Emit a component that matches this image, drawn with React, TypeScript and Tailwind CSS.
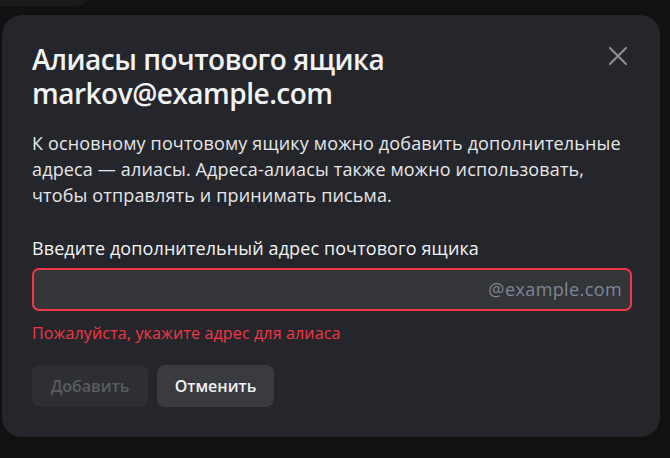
export default function App() {
  return (
    <div
      className="relative w-[670px] h-[458px] overflow-hidden bg-[#111111]"
      style={{ fontFamily: '"Open Sans", "Noto Sans", sans-serif' }}
    >
      {/* faint page behind the overlay */}
      <div className="absolute left-0 top-[-20px] w-[88px] h-[26px] rounded-br-[10px] bg-[#1a1a1a]" />
      <div className="absolute left-[84px] top-0 bottom-0 w-px bg-[#151515]" />

      <div className="absolute left-[2px] top-[15px] w-[658px] h-[422px] rounded-[20px] bg-[#25262b] px-[30px] pt-[27px] flex flex-col">
        <div className="flex items-start justify-between">
          <h2 className="text-[28px] leading-[34px] font-semibold tracking-[-0.5px] text-[#f2f3f5]">
            Алиасы почтового ящика
            <br />
            markov@example.com
          </h2>
          <button type="button" className="mt-[4px] mr-[2px] text-[#8b8c91]">
            <svg width="20" height="20" viewBox="0 0 20 20" fill="none" stroke="currentColor" strokeWidth={2.3} strokeLinecap="round">
              <path d="M2 2l16 16M18 2L2 18" />
            </svg>
          </button>
        </div>

        <p className="mt-[20px] w-[600px] text-[18px] leading-[26px] tracking-[0.15px] text-[#e6e7ea]">
          К основному почтовому ящику можно добавить дополнительные адреса — алиасы. Адреса-алиасы также можно использовать, чтобы отправлять и принимать письма.
        </p>

        <div className="mt-[28px] flex flex-col gap-[8px]">
          <label className="text-[18px] leading-[24px] tracking-[0.1px] text-[#f2f3f5]">
            Введите дополнительный адрес почтового ящика
          </label>
          <div className="w-[600px] h-[43px] flex items-center rounded-[7px] border-2 border-[#f33645] bg-[#343539] pr-[8px]">
            <input type="text" className="flex-1 min-w-0 bg-transparent outline-none px-3 text-[18px] text-white" />
            <span className="text-[18px] tracking-[0.4px] text-[#7d8595]">@example.com</span>
          </div>
        </div>

        <div className="mt-[11px] text-[16px] leading-[22px] tracking-[0.15px] text-[#f33645]">
          Пожалуйста, укажите адрес для алиаса
        </div>

        <div className="mt-[21px] flex gap-[9px]">
          <button
            type="button"
            disabled
            className="w-[116px] h-[42px] rounded-[8px] bg-[#2e2f34] text-[16px] font-semibold text-[#5b5c61]"
          >
            Добавить
          </button>
          <button
            type="button"
            className="w-[117px] h-[42px] rounded-[8px] bg-[#3a3b40] text-[16px] font-semibold text-[#f2f3f5]"
          >
            Отменить
          </button>
        </div>
      </div>
    </div>
  );
}
